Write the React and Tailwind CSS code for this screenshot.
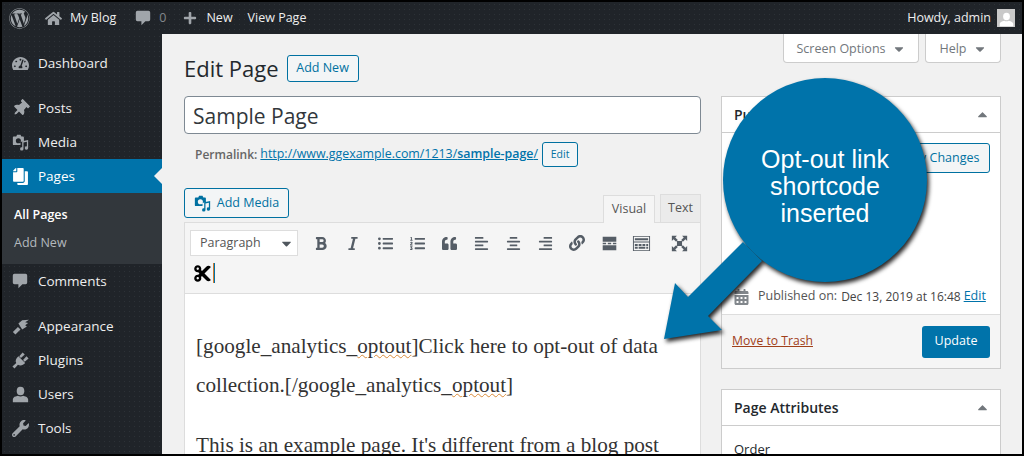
import {
  FaWordpress, FaHome, FaPlus, FaTachometerAlt, FaThumbtack, FaCopy, FaWrench,
  FaBold, FaItalic, FaListUl, FaListOl, FaQuoteLeft, FaAlignLeft, FaAlignCenter, FaAlignRight, FaLink, FaCut, FaCaretDown, FaCaretUp, FaCalendarAlt,
} from 'react-icons/fa';

const font = "font-['Open_Sans','Noto_Sans',sans-serif]";

const MediaIcon = ({ className }) => (
  <svg viewBox="0 0 20 20" className={className} fill="currentColor">
    <path d="M2 3h3l1-2h4l1 2h2a1 1 0 0 1 1 1v4.500l-4 1V13H2a1 1 0 0 1-1-1V4a1 1 0 0 1 1-1zm5.500 2a3 3 0 1 0 0 6 3 3 0 0 0 0-6z" />
    <path d="M19 7v9.500a2 2 0 1 1-1.500-1.900V9l-4 1v7.500a2 2 0 1 1-1.500-1.900V8.500z" />
  </svg>
);

const BubbleIcon = ({ className }) => (
  <svg viewBox="0 0 20 20" className={className} fill="currentColor">
    <path d="M3 1h14a2 2 0 0 1 2 2v9a2 2 0 0 1-2 2h-4l-5 5v-5H3a2 2 0 0 1-2-2V3a2 2 0 0 1 2-2z" />
  </svg>
);

const BrushIcon = ({ className }) => (
  <svg viewBox="0 0 20 20" className={className} fill="currentColor">
    <path d="M1 16.500L7 10.500L10 13.500L4 19.500Z" />
    <path d="M7.500 6.500L12 2.500L20 2L15.500 5L19 6L15.500 8.500L17.500 10L12 13.500Z" />
  </svg>
);

const PlugIcon = ({ className }) => (
  <svg viewBox="0 0 20 20" className={className} fill="currentColor">
    <path d="M7.500 5L15.500 13C13 16 9.500 16.500 7 15L3 19.500L0.500 17L5 13C3.500 10.500 4.500 7.500 7.500 5Z" />
    <path d="M8.500 5L12.500 0.500L15 3L10.500 7ZM13 9.500L17 5L19.500 7.500L15 11.500Z" />
  </svg>
);

const UserIcon = ({ className }) => (
  <svg viewBox="0 0 20 20" className={className} fill="currentColor">
    <ellipse cx="10" cy="6" rx="4.500" ry="5" />
    <path d="M1 19v-3c0-3 4-4 6-4.500 1.500 1 4.500 1 6 0 2 .5 6 1.500 6 4.500v3z" />
  </svg>
);

const MoreIcon = () => (
  <svg viewBox="0 0 20 20" className="w-[17px] h-[17px]" fill="currentColor">
    <path d="M2 2h16v6H2zM2 9h4v2H2zM8 9h4v2H8zM14 9h4v2h-4zM2 12h16v6H2z" />
  </svg>
);

const KitchenIcon = () => (
  <svg viewBox="0 0 20 20" className="w-[19px] h-[19px]" fill="currentColor">
    <path fillRule="evenodd" d="M1 2h18v16H1zm1 1v5h16V3zm0 6v8h16V9z" />
    <path d="M3 4.500h14v2H3zM3 10.500h3v2H3zM7 10.500h3v2H7zM11 10.500h3v2h-3zM15 10.500h2v2h-2zM3 13.500h3v2H3zM7 13.500h7v2H7zM15 13.500h2v2h-2z" />
  </svg>
);

const FullscreenIcon = () => (
  <svg viewBox="0 0 20 20" className="w-[17px] h-[17px]" fill="currentColor">
    <path d="M7 7h6v6H7zM1 1h6L5 3l3 3-2 2-3-3-2 2zM19 1v6l-2-2-3 3-2-2 3-3-2-2zM1 19v-6l2 2 3-3 2 2-3 3 2 2zM19 19h-6l2-2-3-3 2-2 3 3 2-2z" />
  </svg>
);

const menuTop = [
  { label: 'Posts', icon: FaThumbtack, rotate: true },
  { label: 'Media', icon: MediaIcon },
];

const menuBottom = [
  { label: 'Appearance', icon: BrushIcon },
  { label: 'Plugins', icon: PlugIcon },
  { label: 'Users', icon: UserIcon },
  { label: 'Tools', icon: FaWrench },
];

const dark = 'bg-[#202429] bg-[radial-gradient(#2d3237_0.6px,transparent_0.7px)] bg-[size:5px_5px]';

const MenuItem = ({ label, icon: Icon, rotate }) => (
  <div className="h-[34px] flex items-center">
    <div className="w-[36px] flex justify-center text-[#a0a5aa]">
      <Icon className={`w-[17px] h-[17px] ${rotate ? 'rotate-45' : ''}`} />
    </div>
    <span className="text-[13.500px] text-[#eeeeee]">{label}</span>
  </div>
);

const Sidebar = () => (
  <div className={`w-[160px] shrink-0 flex flex-col ${dark}`}>
    <div className="pt-[12px]">
      <MenuItem label="Dashboard" icon={FaTachometerAlt} />
    </div>
    <div className="pt-[11px]">
      {menuTop.map((item) => <MenuItem key={item.label} {...item} />)}
    </div>
    <div className="h-[34px] bg-[#0073aa] flex items-center relative">
      <div className="w-[36px] flex justify-center text-white">
        <FaCopy className="w-[17px] h-[17px] -scale-x-100" />
      </div>
      <span className="text-[13.500px] text-white">Pages</span>
      <div className="absolute right-0 top-[9px] border-y-[8px] border-y-transparent border-r-[8px] border-r-[#f1f1f1]" />
    </div>
    <div className="h-[71px] bg-[#32373c] pl-[12px] pt-[8px] text-[12.500px] leading-[28px]">
      <div className="font-semibold text-white">All Pages</div>
      <div className="text-[#b4b9be]">Add New</div>
    </div>
    <div className="h-[34px] flex items-center">
      <div className="w-[36px] flex justify-center text-[#a0a5aa]"><BubbleIcon className="w-[16px] h-[16px]" /></div>
      <span className="text-[13.500px] text-[#eeeeee]">Comments</span>
    </div>
    <div className="pt-[11px]">
      {menuBottom.map((item) => <MenuItem key={item.label} {...item} />)}
    </div>
  </div>
);

const TopBar = () => (
  <div className={`h-[32px] shrink-0 flex items-center text-[12.500px] text-[#eeeeee] ${dark}`}>
    <FaWordpress className="w-[21px] h-[21px] ml-[7px] text-[#a0a5aa]" />
    <FaHome className="w-[17px] h-[17px] ml-[15px] text-[#a0a5aa]" />
    <span className="ml-[8px]">My Blog</span>
    <BubbleIcon className="w-[16px] h-[16px] ml-[19px] text-[#a0a5aa]" />
    <span className="ml-[8px] text-[#82878c]">0</span>
    <FaPlus className="w-[14px] h-[14px] ml-[17px] text-[#a0a5aa]" />
    <span className="ml-[9px]">New</span>
    <span className="ml-[15px]">View Page</span>
    <span className="ml-auto">Howdy, admin</span>
    <div className="w-[18px] h-[18px] ml-[6px] mr-[7px] bg-[#c9c9c9] flex items-end justify-center overflow-hidden">
      <UserIcon className="w-[15px] h-[15px] text-white" />
    </div>
  </div>
);

const toolbarIcons = [
  <FaBold className="w-[14px] h-[15px]" />,
  <FaItalic className="w-[14px] h-[15px]" />,
  <FaListUl className="w-[15px] h-[15px]" />,
  <FaListOl className="w-[15px] h-[15px]" />,
  <FaQuoteLeft className="w-[15px] h-[15px]" />,
  <FaAlignLeft className="w-[15px] h-[15px]" />,
  <FaAlignCenter className="w-[15px] h-[15px]" />,
  <FaAlignRight className="w-[15px] h-[15px]" />,
  <FaLink className="w-[16px] h-[16px]" />,
  <MoreIcon />,
  <KitchenIcon />,
];

const Editor = () => (
  <div className="w-[517px] shrink-0 flex flex-col min-h-0">
    <div className="h-[48px] flex items-end">
      <div className="flex items-center mt-[21px] h-[27px]">
        <h1 className="text-[22px] text-[#23282d]">Edit Page</h1>
        <button className="ml-[8px] w-[72px] h-[27px] border border-[#0071a1] bg-[#f3f5f6] rounded-[3px] text-[12.500px] text-[#0071a1]">Add New</button>
      </div>
    </div>
    <div className="mt-[14px] h-[38px] border border-[#7e8993] rounded-[4px] bg-white flex items-center px-[8px] pt-[3px] text-[21px] text-[#32373c]">Sample Page</div>
    <div className="mt-[8px] ml-[11px] h-[25px] flex items-center text-[12px] text-[#666666]">
      <span className="font-semibold">Permalink:</span>
      <a className="ml-[3px] text-[12.400px] text-[#0073aa] underline">http://www.ggexample.com/1213/<b className="font-semibold">sample-page</b>/</a>
      <button className="ml-[4px] w-[36px] h-[25px] border border-[#0071a1] bg-[#f3f5f6] rounded-[3px] text-[10.500px] text-[#0071a1]">Edit</button>
    </div>
    <div className="mt-[21px] flex items-end h-[34px]">
      <button className="self-start w-[105px] h-[30px] border border-[#0071a1] bg-[#f3f5f6] rounded-[3px] flex items-center justify-center text-[12.500px] text-[#0071a1]">
        <MediaIcon className="w-[17px] h-[17px] mr-[6px]" />
        Add Media
      </button>
      <div className="ml-auto w-[52px] h-[28px] -mb-[1px] relative border border-[#dddddd] border-b-0 bg-[#f5f5f5] flex items-center justify-center text-[12.500px] text-[#555555]">Visual</div>
      <div className="ml-[5px] w-[41px] h-[28px] border border-[#dddddd] border-b-0 bg-[#ebebeb] flex items-center justify-center text-[12.500px] text-[#555555]">Text</div>
    </div>
    <div className="h-[72px] border border-[#dddddd] bg-[#f5f5f5] pl-[5px] pt-[7px]">
      <div className="flex items-center text-[#555d66]">
        <div className="w-[108px] h-[26px] border border-[#dddddd] bg-white flex items-center pl-[9px] pr-[3px] pt-[1px] text-[12.500px] text-[#555555]">
          Paragraph
          <FaCaretDown className="ml-auto w-[15px] h-[15px] text-[#50575e]" />
        </div>
        <div className="ml-[7px] flex">
          {toolbarIcons.map((icon, i) => (
            <div key={i} className="w-[32px] h-[26px] flex items-center justify-center">{icon}</div>
          ))}
        </div>
        <div className="ml-[6px] w-[32px] h-[26px] flex items-center justify-center"><FullscreenIcon /></div>
      </div>
      <div className="mt-[5px] ml-[3px] h-[24px] flex items-center">
        <FaCut className="w-[19px] h-[19px] text-black" />
        <div className="ml-[1px] w-[2px] h-[20px] bg-[linear-gradient(to_right,#d07a30_50%,#0073aa_50%)]" />
      </div>
    </div>
    <div className="flex-1 min-h-0 overflow-hidden border-x border-[#dddddd] bg-white pl-[11px] pr-[10px] pt-[33px] font-['Liberation_Serif',serif] text-[21.200px] leading-[39px] text-[#333333]">
      <p className="whitespace-nowrap">[google_analytics_<span className="underline decoration-wavy decoration-[#d98b3a] decoration-1">optout</span>]Click here to opt-out of data</p>
      <p className="whitespace-nowrap">collection.[/google_analytics_<span className="underline decoration-wavy decoration-[#d98b3a] decoration-1">optout</span>]</p>
      <p className="whitespace-nowrap mt-[21px]">This is an example page. It's different from a blog post</p>
    </div>
  </div>
);

const BoxHeader = ({ title }) => (
  <div className="h-[36px] border-b border-[#cccccc] flex items-center px-[12px] text-[14px] font-semibold text-[#23282d]">
    {title}
    <FaCaretUp className="ml-auto -mr-[2px] w-[15px] h-[15px] text-[#72777c]" />
  </div>
);

const SideColumn = () => (
  <div className="ml-[20px] w-[280px] shrink-0 flex flex-col min-h-0">
    <div className="flex justify-end gap-[6px] h-[29px]">
      <div className="w-[136px] pt-[2px] border border-t-0 border-[#cccccc] rounded-b-[4px] bg-white flex items-center justify-center text-[12.500px] text-[#72777c]">
        Screen Options
        <FaCaretDown className="ml-[6px] w-[14px] h-[14px]" />
      </div>
      <div className="w-[76px] pt-[2px] border border-t-0 border-[#cccccc] rounded-b-[4px] bg-white flex items-center justify-center text-[12.500px] text-[#72777c]">
        Help
        <FaCaretDown className="ml-[6px] w-[14px] h-[14px]" />
      </div>
    </div>
    <div className="mt-[33px] h-[273px] border border-[#cccccc] bg-white flex flex-col">
      <BoxHeader title="Publish" />
      <div className="flex-1 flex flex-col">
        <div className="mt-[10px] h-[30px] w-[120px] self-end mr-[10px] border border-[#0071a1] bg-[#f3f5f6] rounded-[3px] flex items-center justify-center text-[12.500px] text-[#0071a1] whitespace-nowrap">Preview Changes</div>
        <div className="mt-auto mb-[8px] ml-[12px] flex items-center text-[12.500px] text-[#444444]">
          <FaCalendarAlt className="w-[15px] h-[16px] text-[#82878c]" />
          <span className="ml-[9px] text-[#555555]">Published on:</span>
          <span className="ml-[4px] text-[12px]">Dec 13, 2019 at 16:48</span>
          <a className="ml-[3px] text-[#0073aa] underline">Edit</a>
        </div>
      </div>
      <div className="h-[54px] border-t border-[#dddddd] bg-[#f5f5f5] flex items-center px-[10px] justify-between">
        <a className="text-[12.200px] text-[#a0401a] underline">Move to Trash</a>
        <button className="w-[68px] h-[32px] bg-[#0073aa] rounded-[3px] text-[12.500px] text-white">Update</button>
      </div>
    </div>
    <div className="mt-[20px] flex-1 border border-b-0 border-[#cccccc] bg-white overflow-hidden">
      <BoxHeader title="Page Attributes" />
      <div className="px-[12px] pt-[14px] text-[13px] text-[#23282d]">Order</div>
    </div>
  </div>
);

const Callout = () => (
  <div className="absolute left-[660px] top-[76px] w-[270px] h-[270px]">
    <svg viewBox="0 0 270 270" className="w-full h-full drop-shadow-[2px_3px_2px_rgba(0,0,0,0.85)]">
      <circle cx="165" cy="104" r="102" fill="#0073aa" />
      <path fill="#0073aa" d="M83 166L28 221L15 207L4 263L62 254L48 240L102 185Z" />
    </svg>
    <div className="absolute left-[63px] top-[70px] w-[204px] text-center font-['Liberation_Sans',sans-serif] text-[25px] leading-[27px] text-white">
      Opt-out link<br />shortcode<br />inserted
    </div>
  </div>
);

export default function App() {
  return (
    <div className={`relative w-[1024px] h-[456px] bg-black p-[2px] overflow-hidden ${font}`}>
      <div className="w-full h-full flex flex-col bg-[#f1f1f1]">
        <TopBar />
        <div className="flex-1 min-h-0 flex">
          <Sidebar />
          <div className="flex-1 min-h-0 flex pl-[22px]">
            <Editor />
            <SideColumn />
          </div>
        </div>
      </div>
      <Callout />
    </div>
  );
}
